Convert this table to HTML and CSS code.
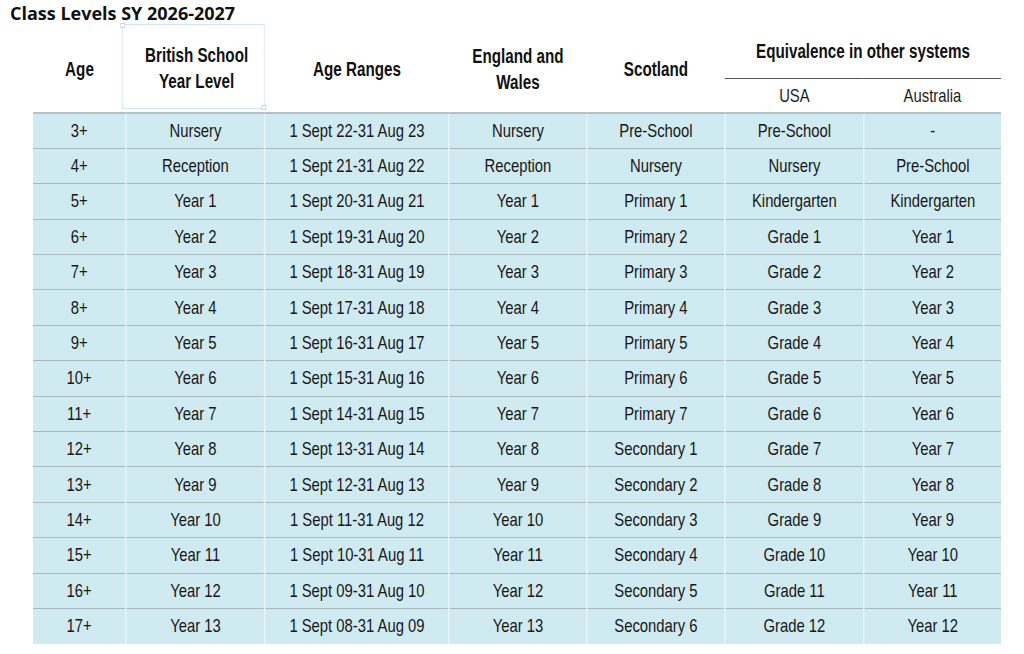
FILE: index.html
```html
<!DOCTYPE html>
<html>
<head>
<meta charset="utf-8">
<link rel="stylesheet" href="styles.css">
</head>
<body>
<div class="title">Class Levels SY 2026-2027</div>
<div class="wrap">
<table class="levels">
  <colgroup>
    <col class="c1"><col class="c2"><col class="c3"><col class="c4"><col class="c5"><col class="c6"><col class="c7">
  </colgroup>
  <thead>
    <tr class="h1">
      <th rowspan="2">Age</th>
      <th rowspan="2" class="sel"><span class="selbox">British School<br>Year Level<i class="hd tl"></i><i class="hd br"></i></span></th>
      <th rowspan="2">Age Ranges</th>
      <th rowspan="2">England and<br>Wales</th>
      <th rowspan="2">Scotland</th>
      <th colspan="2" class="equiv">Equivalence in other systems</th>
    </tr>
    <tr class="h2">
      <th class="sub">USA</th>
      <th class="sub">Australia</th>
    </tr>
  </thead>
  <tbody>
    <tr><td>3+</td><td>Nursery</td><td>1 Sept 22-31 Aug 23</td><td>Nursery</td><td>Pre-School</td><td>Pre-School</td><td>-</td></tr>
    <tr><td>4+</td><td>Reception</td><td>1 Sept 21-31 Aug 22</td><td>Reception</td><td>Nursery</td><td>Nursery</td><td>Pre-School</td></tr>
    <tr><td>5+</td><td>Year 1</td><td>1 Sept 20-31 Aug 21</td><td>Year 1</td><td>Primary 1</td><td>Kindergarten</td><td>Kindergarten</td></tr>
    <tr><td>6+</td><td>Year 2</td><td>1 Sept 19-31 Aug 20</td><td>Year 2</td><td>Primary 2</td><td>Grade 1</td><td>Year 1</td></tr>
    <tr><td>7+</td><td>Year 3</td><td>1 Sept 18-31 Aug 19</td><td>Year 3</td><td>Primary 3</td><td>Grade 2</td><td>Year 2</td></tr>
    <tr><td>8+</td><td>Year 4</td><td>1 Sept 17-31 Aug 18</td><td>Year 4</td><td>Primary 4</td><td>Grade 3</td><td>Year 3</td></tr>
    <tr><td>9+</td><td>Year 5</td><td>1 Sept 16-31 Aug 17</td><td>Year 5</td><td>Primary 5</td><td>Grade 4</td><td>Year 4</td></tr>
    <tr><td>10+</td><td>Year 6</td><td>1 Sept 15-31 Aug 16</td><td>Year 6</td><td>Primary 6</td><td>Grade 5</td><td>Year 5</td></tr>
    <tr><td>11+</td><td>Year 7</td><td>1 Sept 14-31 Aug 15</td><td>Year 7</td><td>Primary 7</td><td>Grade 6</td><td>Year 6</td></tr>
    <tr><td>12+</td><td>Year 8</td><td>1 Sept 13-31 Aug 14</td><td>Year 8</td><td>Secondary 1</td><td>Grade 7</td><td>Year 7</td></tr>
    <tr><td>13+</td><td>Year 9</td><td>1 Sept 12-31 Aug 13</td><td>Year 9</td><td>Secondary 2</td><td>Grade 8</td><td>Year 8</td></tr>
    <tr><td>14+</td><td>Year 10</td><td>1 Sept 11-31 Aug 12</td><td>Year 10</td><td>Secondary 3</td><td>Grade 9</td><td>Year 9</td></tr>
    <tr><td>15+</td><td>Year 11</td><td>1 Sept 10-31 Aug 11</td><td>Year 11</td><td>Secondary 4</td><td>Grade 10</td><td>Year 10</td></tr>
    <tr><td>16+</td><td>Year 12</td><td>1 Sept 09-31 Aug 10</td><td>Year 12</td><td>Secondary 5</td><td>Grade 11</td><td>Year 11</td></tr>
    <tr><td>17+</td><td>Year 13</td><td>1 Sept 08-31 Aug 09</td><td>Year 13</td><td>Secondary 6</td><td>Grade 12</td><td>Year 12</td></tr>
  </tbody>
</table>
</div>
</body>
</html>
```

FILE: styles.css
```css
html, body {
  margin: 0;
  padding: 0;
  background: #ffffff;
  overflow: hidden;
}
body {
  font-family: "Liberation Sans", Arial, sans-serif;
  color: #1a1a1a;
}
.title {
  font-family: "Open Sans", "Liberation Sans", sans-serif;
  font-weight: 700;
  font-size: 18px;
  line-height: 22px;
  padding: 2px 0 0 10px;
  height: 22px;
  color: #111;
  white-space: nowrap;
}
.wrap {
  margin-left: 33px;
  width: 968px;
}
/* the table is laid out wide and condensed horizontally to mimic a condensed typeface */
.levels {
  border-collapse: collapse;
  table-layout: fixed;
  width: 1241px;
  transform: scaleX(0.78);
  transform-origin: 0 0;
}
.c1 { width: 119.2px; }
.c2 { width: 178.2px; }
.c3 { width: 235.9px; }
.c4 { width: 176.9px; }
.c5 { width: 176.9px; }
.c6 { width: 178.2px; }
.c7 { width: 175.7px; }
.levels th {
  font-weight: 700;
  font-size: 19.5px;
  line-height: 26px;
  text-align: center;
  vertical-align: middle;
  padding: 1px 0 0 0;
  color: #111;
}
.h1 { height: 54px; }
.h2 { height: 35px; }
.levels th.equiv {
  border-bottom: 1px solid #555;
  vertical-align: top;
  padding-top: 15px;
  line-height: 24px;
}
.levels th.sub {
  font-weight: 400;
  font-size: 19px;
  color: #1e1e1e;
  padding-top: 2px;
}
.levels th.sel {
  position: relative;
}
.selbox {
  position: absolute;
  left: -5px;
  right: 0;
  top: 0;
  bottom: 3px;
  border: 1px solid #cfe3fb;
  display: flex;
  align-items: center;
  justify-content: center;
  padding: 3px 0 0 8px;
}
.hd {
  position: absolute;
  width: 4px;
  height: 3px;
  border: 1px solid #b9d3f3;
  background: #fff;
}
.hd.tl { left: -3px; top: -2px; }
.hd.br { right: -3px; bottom: -2px; }
.levels tbody tr {
  height: 35.4px;
  background: #d0eaf1;
}
.levels tbody tr:first-child td {
  border-top: 2px solid #b4c2c6;
}
.levels tbody td {
  font-size: 19px;
  text-align: center;
  vertical-align: middle;
  padding: 0;
  color: #171717;
  border-top: 1.5px solid #a9b7bb;
  border-left: 2.5px solid #e6f4f8;
}
.levels tbody td:first-child {
  border-left: none;
}
```
